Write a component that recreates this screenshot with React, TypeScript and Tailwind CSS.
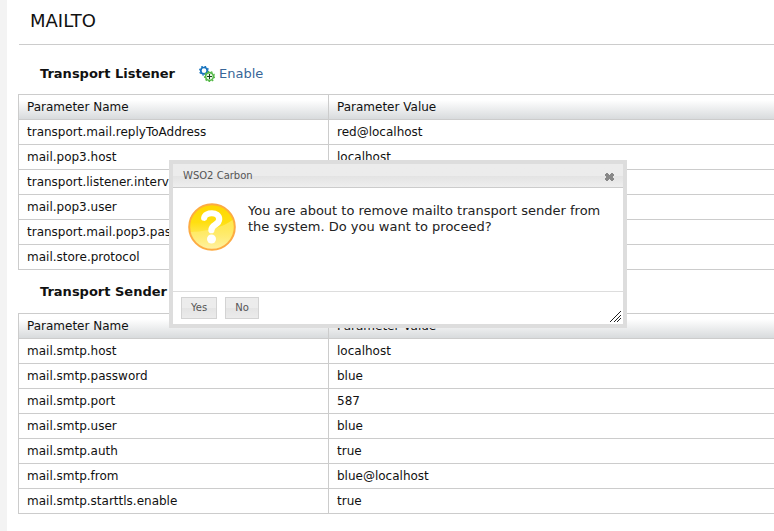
type Param = { name: string; value: string };

const listenerParams: Param[] = [
  { name: "transport.mail.replyToAddress", value: "red@localhost" },
  { name: "mail.pop3.host", value: "localhost" },
  { name: "transport.listener.interval", value: "" },
  { name: "mail.pop3.user", value: "" },
  { name: "transport.mail.pop3.password", value: "" },
  { name: "mail.store.protocol", value: "" },
];

const senderParams: Param[] = [
  { name: "mail.smtp.host", value: "localhost" },
  { name: "mail.smtp.password", value: "blue" },
  { name: "mail.smtp.port", value: "587" },
  { name: "mail.smtp.user", value: "blue" },
  { name: "mail.smtp.auth", value: "true" },
  { name: "mail.smtp.from", value: "blue@localhost" },
  { name: "mail.smtp.starttls.enable", value: "true" },
];

function ParamTable({ rows, label }: { rows: Param[]; label: string }) {
  return (
    <table aria-label={label} className="w-full table-fixed border-collapse border border-[#cccccc] text-left">
      <thead>
        <tr className="h-[25px] bg-linear-to-b from-white from-20% to-[#d6d9db]">
          <th className="w-[310px] border border-[#cccccc] px-2 py-0 font-normal">Parameter Name</th>
          <th className="border border-[#cccccc] px-2 py-0 font-normal">Parameter Value</th>
        </tr>
      </thead>
      <tbody>
        {rows.map((row) => (
          <tr key={row.name} className="h-[25px]">
            <td className="border border-[#cccccc] px-2 py-0">{row.name}</td>
            <td className="border border-[#cccccc] px-2 py-0">{row.value}</td>
          </tr>
        ))}
      </tbody>
    </table>
  );
}

function EnableIcon() {
  return (
    <svg width="16" height="16" viewBox="0 0 16 16" fill="none" aria-hidden="true">
      <circle cx="5" cy="4.7" r="3.2" stroke="#1773be" strokeWidth="1.7" />
      <circle cx="5" cy="4.7" r="4.4" stroke="#1773be" strokeWidth="1.2" strokeDasharray="1.7 1.75" />
      <circle cx="10.5" cy="10.5" r="3.9" fill="#e9f8e6" stroke="#55b948" strokeWidth="1.6" />
      <circle cx="10.5" cy="10.5" r="5" stroke="#55b948" strokeWidth="1.2" strokeDasharray="1.7 1.79" />
      <path d="M8 10.5h5M10.5 8v5" stroke="#173d1c" strokeWidth="1" />
    </svg>
  );
}

function QuestionIcon() {
  return (
    <svg width="48" height="48" viewBox="0 0 48 48" aria-hidden="true" className="shrink-0">
      <defs>
        <linearGradient id="disc" x1="0" y1="0" x2="0" y2="1">
          <stop offset="0" stopColor="#ffd600" />
          <stop offset="0.4" stopColor="#ffdf10" />
          <stop offset="1" stopColor="#fff2a8" />
        </linearGradient>
        <linearGradient id="shine" x1="0" y1="0" x2="0" y2="1">
          <stop offset="0" stopColor="#fff" stopOpacity="0.3" />
          <stop offset="1" stopColor="#fff" stopOpacity="0" />
        </linearGradient>
      </defs>
      <circle cx="24" cy="24" r="22.8" fill="url(#disc)" stroke="#fdab42" strokeWidth="2" />
      <path d="M2.5 29C12 29 33 26 44.5 17A21.8 21.8 0 0 1 24 45.8 21.8 21.8 0 0 1 2.5 29Z" fill="url(#shine)" />
      <path d="M16.2 14.8C17 8.8 31.2 8.2 31.2 16.2C31.2 22 23.4 21.3 23.4 27.2" fill="none" stroke="#fff" strokeWidth="6.2" strokeLinecap="round" />
      <circle cx="23.5" cy="36" r="4.5" fill="#fff" />
    </svg>
  );
}

function ConfirmDialog() {
  const button =
    "h-[22px] border border-[#d3d3d3] bg-linear-to-b from-[#ececec] from-50% via-[#e4e4e4] via-50% to-[#ebebeb] px-[9px] text-[10px] leading-[20px] text-[#555555]";
  return (
    <div
      role="dialog"
      aria-labelledby="dialog-title"
      className="absolute top-[160px] left-[162px] w-[458px] border-4 border-[#dddddd] bg-white text-[#222222]"
    >
      <div className="flex h-6 items-center justify-between border-b border-[#cccccc] bg-linear-to-b from-[#ececec] from-50% via-[#e3e3e3] via-50% to-[#eeeeee] pr-2 pl-[10px]">
        <h2 id="dialog-title" className="text-[10px] leading-4 text-[#555555]">WSO2 Carbon</h2>
        <button type="button" aria-label="Close" className="mt-0.5 flex">
          <svg width="11" height="10" viewBox="0 0 11 10" aria-hidden="true" shapeRendering="crispEdges">
            <path d="M2 1h2v1h1v1h1V2h1V1h2v1h1v2H9v1H8v0h1v1h1v2H9v1H7V8H6V7H5v1H4v1H2V8H1V6h1V5h1V5H2V4H1V2h1z" fill="#888888" />
          </svg>
        </button>
      </div>
      <div className="flex h-[103px] gap-3 pt-[15px] pr-[10px] pl-[15px]">
        <QuestionIcon />
        <p className="text-[13px] leading-4">
          You are about to remove mailto transport sender from the system. Do you want to proceed?
        </p>
      </div>
      <div className="flex h-[33px] items-end justify-between border-t border-[#dddddd] pb-[5px] pl-2">
        <div className="flex gap-2">
          <button type="button" className={button}>Yes</button>
          <button type="button" className={button}>No</button>
        </div>
        <svg width="12" height="12" viewBox="0 0 12 12" aria-hidden="true" className="mr-px -mb-1" fill="#222222" shapeRendering="crispEdges">
          {[11, 7, 4].map((length) =>
            Array.from({ length }, (_, i) => (
              <rect key={`${length}-${i}`} x={10 - i} y={11 - length + i} width="1" height="1" />
            )),
          )}
        </svg>
      </div>
    </div>
  );
}

export default function App() {
  return (
    <div className="relative min-h-screen overflow-hidden border-l-[7px] border-[#f3f3f3] bg-white font-['DejaVu_Sans',sans-serif] text-[12px] leading-4 text-[#111111]">
      <main className="-mr-px pl-[11px]">
        <h1 className="ml-px border-b border-[#cccccc] pt-[10px] pb-3 pl-[11px] text-[18px] leading-[22px]">MAILTO</h1>
        <div className="flex h-[49px] items-center gap-6 pt-2 pl-[22px] text-[13px]">
          <h2 className="font-bold">Transport Listener</h2>
          <a href="#enable" className="flex items-center gap-1 text-[#386698]">
            <EnableIcon />
            Enable
          </a>
        </div>
        <ParamTable rows={listenerParams} label="Transport Listener" />
        <h2 className="pt-[14px] pb-[13px] pl-[22px] text-[13px] leading-4 font-bold">Transport Sender</h2>
        <ParamTable rows={senderParams} label="Transport Sender" />
      </main>
      <ConfirmDialog />
    </div>
  );
}
